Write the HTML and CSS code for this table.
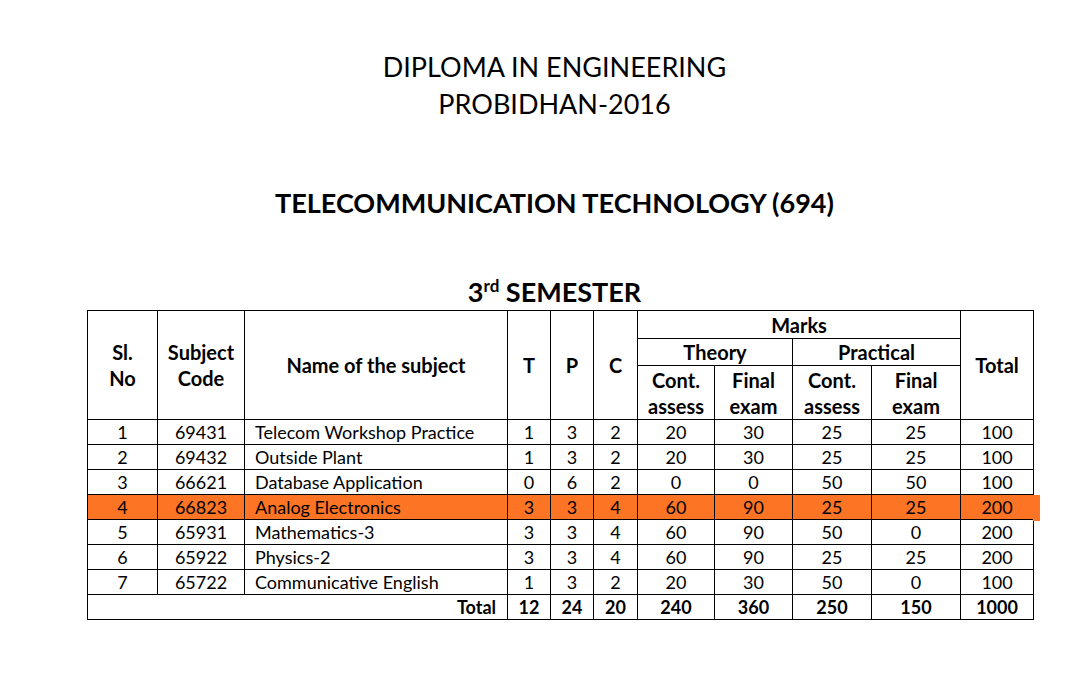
FILE: index.html
```html
<!DOCTYPE html>
<html>
<head>
<meta charset="utf-8">
<link rel="stylesheet" href="styles.css">
</head>
<body>
<div class="doc">
  <div class="titles">
    <div class="t1">DIPLOMA IN ENGINEERING</div>
    <div class="t1">PROBIDHAN-2016</div>
    <div class="t2">TELECOMMUNICATION TECHNOLOGY (694)</div>
    <div class="t3">3<sup>rd</sup> SEMESTER</div>
  </div>
  <table class="grid">
    <colgroup>
      <col class="c70"><col class="c87"><col class="c263"><col class="c43"><col class="c43"><col class="c44"><col class="c77"><col class="c78"><col class="c79"><col class="c89"><col class="c73">
    </colgroup>
    <thead>
      <tr class="h1">
        <th rowspan="3">Sl.<br>No</th>
        <th rowspan="3">Subject<br>Code</th>
        <th rowspan="3">Name of the subject</th>
        <th rowspan="3">T</th>
        <th rowspan="3">P</th>
        <th rowspan="3">C</th>
        <th colspan="4">Marks</th>
        <th rowspan="3">Total</th>
      </tr>
      <tr class="h2">
        <th colspan="2">Theory</th>
        <th colspan="2">Practical</th>
      </tr>
      <tr class="h3">
        <th>Cont.<br>assess</th>
        <th>Final<br>exam</th>
        <th>Cont.<br>assess</th>
        <th>Final<br>exam</th>
      </tr>
    </thead>
    <tbody>
      <tr><td>1</td><td>69431</td><td class="name">Telecom Workshop Practice</td><td>1</td><td>3</td><td>2</td><td>20</td><td>30</td><td>25</td><td>25</td><td>100</td></tr>
      <tr><td>2</td><td>69432</td><td class="name">Outside Plant</td><td>1</td><td>3</td><td>2</td><td>20</td><td>30</td><td>25</td><td>25</td><td>100</td></tr>
      <tr><td>3</td><td>66621</td><td class="name">Database Application</td><td>0</td><td>6</td><td>2</td><td>0</td><td>0</td><td>50</td><td>50</td><td>100</td></tr>
      <tr class="hl"><td>4</td><td>66823</td><td class="name">Analog Electronics</td><td>3</td><td>3</td><td>4</td><td>60</td><td>90</td><td>25</td><td>25</td><td class="last">200</td></tr>
      <tr><td>5</td><td>65931</td><td class="name">Mathematics-3</td><td>3</td><td>3</td><td>4</td><td>60</td><td>90</td><td>50</td><td>0</td><td>200</td></tr>
      <tr><td>6</td><td>65922</td><td class="name">Physics-2</td><td>3</td><td>3</td><td>4</td><td>60</td><td>90</td><td>25</td><td>25</td><td>200</td></tr>
      <tr><td>7</td><td>65722</td><td class="name">Communicative English</td><td>1</td><td>3</td><td>2</td><td>20</td><td>30</td><td>50</td><td>0</td><td>100</td></tr>
      <tr class="tot"><td colspan="3" class="totlabel">Total</td><td>12</td><td>24</td><td>20</td><td>240</td><td>360</td><td>250</td><td>150</td><td>1000</td></tr>
    </tbody>
  </table>
</div>
</body>
</html>
```
FILE: styles.css
```css
html, body {
  margin: 0;
  padding: 0;
  background: #fff;
}
body {
  font-family: "Lato", "Open Sans", sans-serif;
  color: #000;
}
.doc {
  margin-left: 87px;
  width: 947px;
  padding-top: 48px;
}
.titles {
  padding-right: 12px;
  text-align: center;
}
.t1 {
  font-size: 27px;
  line-height: 37px;
}
.t2 {
  font-size: 27px;
  font-weight: bold;
  line-height: 36px;
  margin-top: 63px;
}
.t3 {
  font-size: 27px;
  font-weight: bold;
  line-height: 30px;
  margin-top: 56px;
  margin-bottom: 3px;
}
.t3 sup {
  font-size: 17px;
  line-height: 0;
  vertical-align: 10px;
}
.grid {
  border-collapse: collapse;
  table-layout: fixed;
  width: 947px;
  font-size: 18px;
}
.grid th, .grid td {
  border: 1px solid #000;
  padding: 0;
  text-align: center;
  vertical-align: middle;
}
.grid th {
  font-weight: bold;
  font-size: 20px;
  line-height: 26px;
}
.c70 { width: 70px; }
.c87 { width: 87px; }
.c263 { width: 263px; }
.c43 { width: 43px; }
.c44 { width: 44px; }
.c77 { width: 77px; }
.c78 { width: 78px; }
.c79 { width: 79px; }
.c89 { width: 89px; }
.c73 { width: 73px; }
.h1 th { height: 27px; }
.h2 th { height: 26px; }
.h3 th { height: 53px; }
.grid td {
  height: 24px;
  line-height: 20px;
}
.grid td.name {
  text-align: left;
  padding-left: 10px;
}
.hl td {
  background: #fd7424;
}
.hl td.last {
  position: relative;
}
.hl td.last::after {
  content: "";
  position: absolute;
  left: 100%;
  top: 0;
  width: 7px;
  height: calc(100% + 2px);
  background: #fd7424;
}
.tot td {
  font-weight: bold;
}
.tot td.totlabel {
  text-align: right;
  padding-right: 11px;
}
```
